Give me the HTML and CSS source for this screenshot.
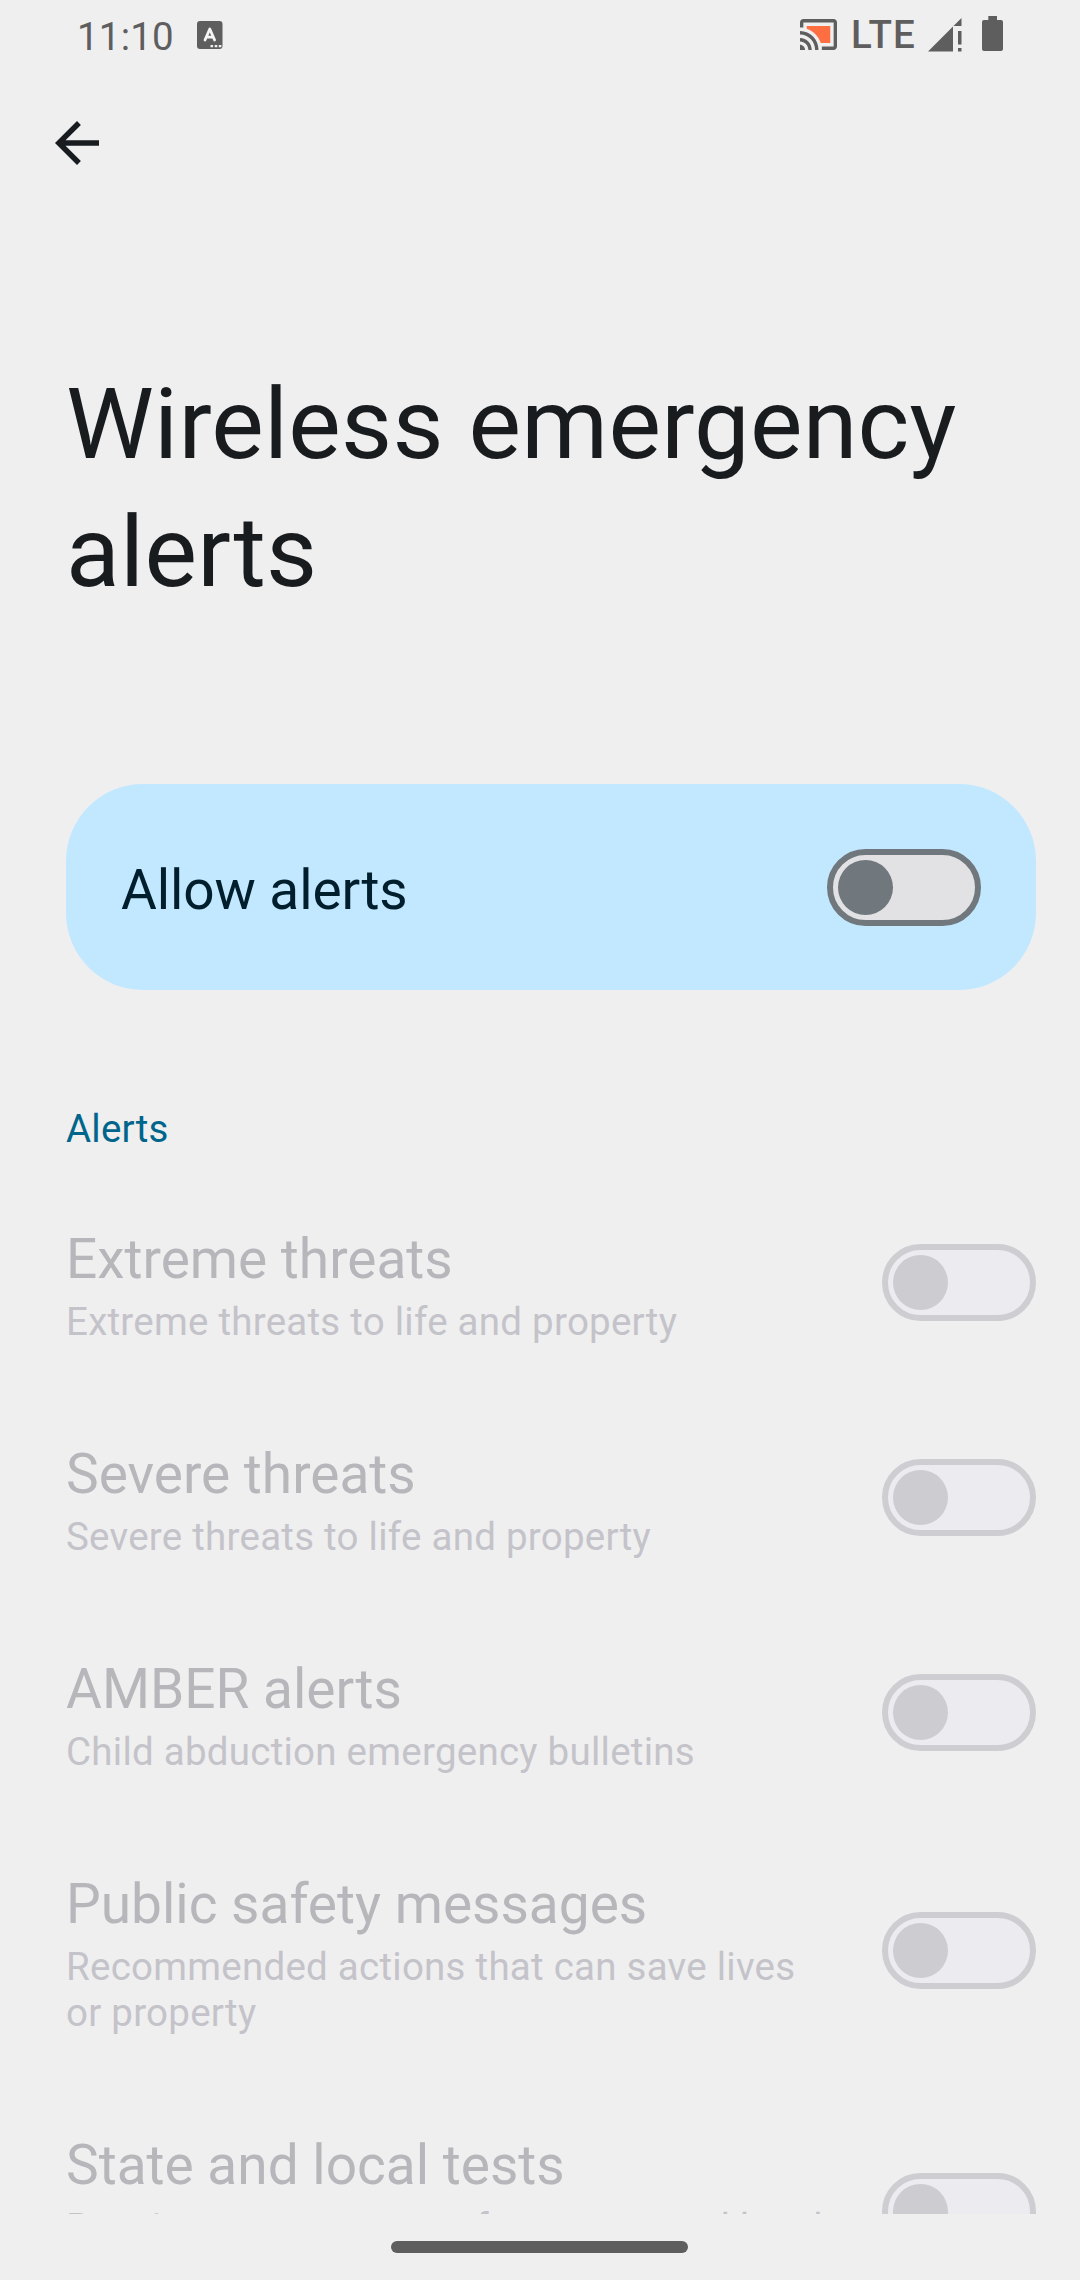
FILE: index.html
```html
<!DOCTYPE html>
<html lang="en">
<head>
<meta charset="utf-8">
<title>Wireless emergency alerts</title>
<link rel="stylesheet" href="styles.css">
</head>
<body>
<div class="screen">
  <header class="status">
    <div class="status-left">
      <span class="clock">11:10</span>
      <svg class="ime" width="26" height="28" viewBox="0 0 26 28">
        <rect width="25.5" height="28" rx="3" fill="#5e5e5e"/>
        <path d="M8 19L12.8 8L17.6 19M9.8 16.2H15.8" fill="none" stroke="#f5f5f5" stroke-width="2.8" stroke-linecap="round" stroke-linejoin="round"/>
        <path d="M13.5 24h2.6v2.2h-2.6zM17.7 24h2.6v2.2h-2.6zM21.8 24h2.6v2.2h-2.6z" fill="#efefef"/>
      </svg>
    </div>
    <div class="status-right">
      <svg class="cast" width="37" height="31" viewBox="1 3 22 18" preserveAspectRatio="none">
        <path fill="#5e5e5e" d="M1 18v3h3c0-1.66-1.34-3-3-3zm0-4v2c2.76 0 5 2.24 5 5h2c0-3.87-3.13-7-7-7zM1 10v2c4.97 0 9 4.03 9 9h2c0-6.08-4.93-11-11-11zm20-7H3c-1.1 0-2 .9-2 2v3h2V5h18v14h-7v2h7c1.1 0 2-.9 2-2V5c0-1.1-.9-2-2-2z"/>
        <path fill="#ff6e40" d="M19 7H5v1.63c3.96 1.28 7.09 4.41 8.37 8.37H19V7z"/>
      </svg>
      <span class="network">LTE</span>
      <svg class="signal" width="34" height="34" viewBox="0 0 34 34" fill="#5e5e5e">
        <path d="M0 33.5L25 8.5V33.5zM33.5 0V8H25.5zM30 13h3.5v13.500H30zM30 30h3.500v3.500H30z"/>
      </svg>
      <svg class="battery" width="21" height="35" viewBox="0 0 21 35" fill="#5e5e5e">
        <path d="M6.300 0h8.700v4H19a2 2 0 0 1 2 2v27a2 2 0 0 1-2 2H2a2 2 0 0 1-2-2V6a2 2 0 0 1 2-2h4.300z"/>
      </svg>
    </div>
  </header>

  <nav class="toolbar">
    <svg width="66" height="66" viewBox="0 0 24 24" fill="#191c1e"><path d="M20 11H7.830l5.590-5.590L12 4l-8 8 8 8 1.410-1.410L7.830 13H20v-2z"/></svg>
  </nav>

  <main class="content">
    <h1 class="title">Wireless emergency alerts</h1>

    <section class="main-switch">
      <span class="main-label">Allow alerts</span>
      <span class="switch"><span class="thumb"></span></span>
    </section>

    <h2 class="category">Alerts</h2>

    <section class="list">
      <div class="row">
        <div class="text"><div class="name">Extreme threats</div><div class="summary">Extreme threats to life and property</div></div>
        <span class="switch disabled"><span class="thumb"></span></span>
      </div>
      <div class="row">
        <div class="text"><div class="name">Severe threats</div><div class="summary">Severe threats to life and property</div></div>
        <span class="switch disabled"><span class="thumb"></span></span>
      </div>
      <div class="row">
        <div class="text"><div class="name">AMBER alerts</div><div class="summary">Child abduction emergency bulletins</div></div>
        <span class="switch disabled"><span class="thumb"></span></span>
      </div>
      <div class="row">
        <div class="text"><div class="name">Public safety messages</div><div class="summary">Recommended actions that can save lives or property</div></div>
        <span class="switch disabled"><span class="thumb"></span></span>
      </div>
      <div class="row">
        <div class="text"><div class="name">State and local tests</div><div class="summary">Receive test messages from state and local authorities</div></div>
        <span class="switch disabled"><span class="thumb"></span></span>
      </div>
    </section>
  </main>

  <footer class="gesture"><span class="handle"></span></footer>
</div>
</body>
</html>
```
FILE: styles.css
```css
* { box-sizing: border-box; }

body {
  margin: 0;
  background: #efeff0;
  font-family: Roboto, "Liberation Sans", sans-serif;
  color: #191c1e;
}

.screen {
  display: flex;
  flex-direction: column;
  width: 1080px;
  height: 2280px;
  overflow: hidden;
}

.status {
  flex: none;
  display: flex;
  justify-content: space-between;
  height: 110px;
  padding: 0 77px;
  color: #5e5e5e;
}

.status-left,
.status-right {
  display: flex;
  align-items: flex-start;
}

.clock,
.network {
  font-size: 38.5px;
  line-height: 46px;
}

.clock { margin-top: 14px; letter-spacing: 0.2px; }
.ime { margin: 21px 0 0 23px; }
.cast { margin-top: 19px; }
.network { margin: 12px 0 0 14px; font-weight: 500; letter-spacing: 1.2px; }
.signal { margin: 18px 0 0 12px; }
.battery { margin: 16px 0 0 20px; }

.toolbar {
  flex: none;
  height: 66px;
  padding-left: 44px;
}

.toolbar svg { display: block; }

.content {
  flex: none;
  height: 2038px;
  padding: 184px 44px 0 66px;
  overflow: hidden;
}

.title {
  margin: 0 0 168px;
  font-size: 99px;
  font-weight: 400;
  line-height: 128px;
  letter-spacing: 0.25px;
}

.main-switch {
  display: flex;
  align-items: center;
  justify-content: space-between;
  height: 206px;
  padding: 0 55px;
  border-radius: 77px;
  background: #c2e8ff;
}

.main-label {
  padding-top: 6px;
  font-size: 55px;
  line-height: 64px;
  letter-spacing: -0.1px;
  color: #001e2c;
}

.switch {
  flex: none;
  display: flex;
  align-items: center;
  width: 154px;
  height: 77px;
  padding-left: 5px;
  border: 6px solid #70787d;
  border-radius: 39px;
  background: #e2e2e5;
}

.thumb {
  width: 55px;
  height: 55px;
  border-radius: 50%;
  background: #70787d;
}

.switch.disabled { border-color: #cecdd2; background: #ececf0; }
.disabled .thumb { background: #cdccd1; }

.category {
  margin: 116px 0 23px;
  font-size: 38.5px;
  font-weight: 400;
  line-height: 46px;
  letter-spacing: 0.2px;
  color: #00658b;
}

.row {
  display: flex;
  align-items: center;
  justify-content: space-between;
  min-height: 215px;
  padding: 52px 0 45px;
}

.row .switch { margin-top: -7px; }
.text { width: 760px; }

.name {
  font-size: 55px;
  line-height: 65px;
  color: #b7b6bb;
}

.summary {
  margin-top: 7px;
  font-size: 38.5px;
  line-height: 46px;
  letter-spacing: 0.25px;
  color: #c4c3c9;
}

.gesture {
  flex: 1;
  display: flex;
  justify-content: center;
  padding: 27px 2px 0 0;
}

.handle {
  width: 297px;
  height: 12px;
  border-radius: 6px;
  background: #5e5e5e;
}
```
